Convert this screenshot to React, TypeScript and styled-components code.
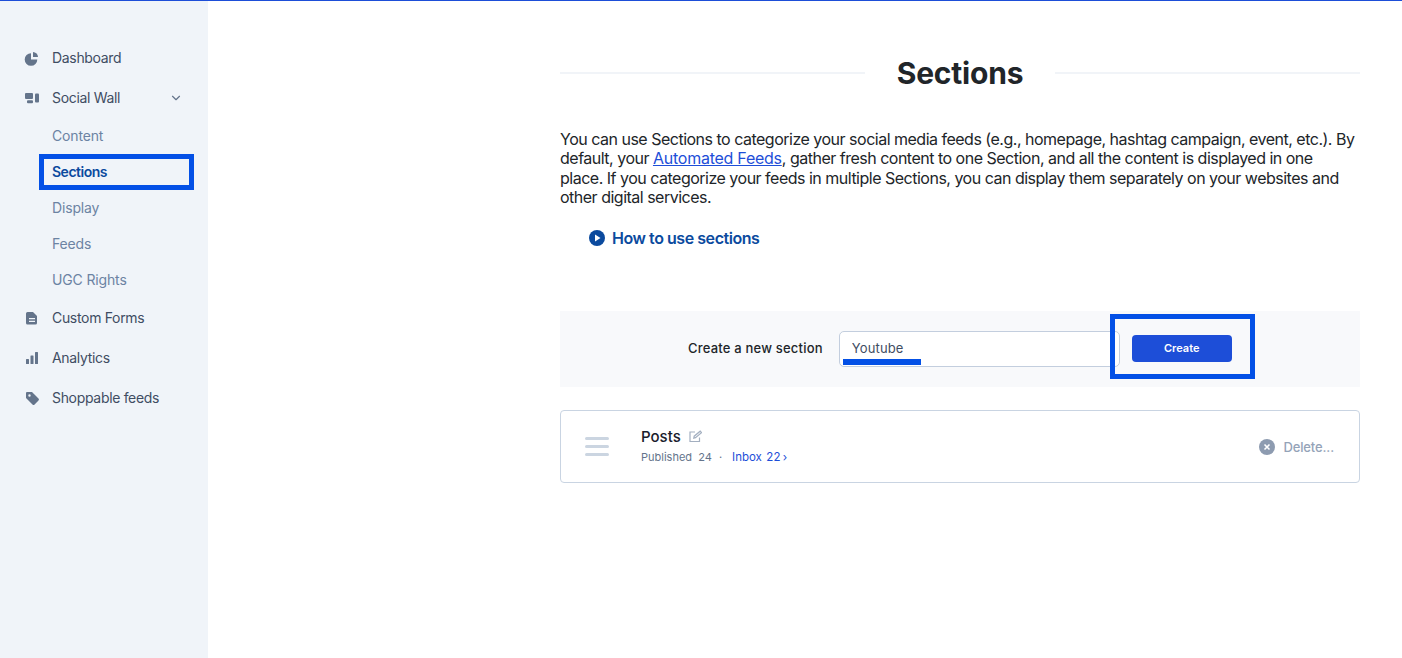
import React from "react";
import styled, { createGlobalStyle } from "styled-components";
import { ChevronDown } from "lucide-react";

const GlobalStyle = createGlobalStyle`
  html, body { margin: 0; padding: 0; background: #fff; }
  body { font-family: Inter, "Liberation Sans", sans-serif; color: #212529; }
  * { box-sizing: border-box; }
`;

const Page = styled.div`
  position: relative;
  display: flex;
  width: 1402px;
  height: 658px;
  overflow: hidden;
  border-top: 1px solid #1d4ed8;
`;

const Sidebar = styled.nav`
  width: 208px;
  flex-shrink: 0;
  background: #f0f4f9;
  padding: 36px 0 0 24px;
`;

const NavRow = styled.div`
  display: flex;
  align-items: center;
  height: 40px;
  width: 159px;
  font-size: 14px;
  letter-spacing: -0.32px;
  color: #3f4d63;
`;

const NavIcon = styled.svg`
  width: 16px;
  height: 16px;
  margin: 2px 12px 0 0;
  fill: #64748b;
  flex-shrink: 0;
`;

const Chevron = styled(ChevronDown)`
  margin: 2px 0 0 auto;
  color: #64748b;
`;

const SubList = styled.div`
  display: flex;
  flex-direction: column;
  padding: 0 0 0 28px;
`;

const SubRow = styled.div<{ $active?: boolean }>`
  display: flex;
  align-items: center;
  height: 36px;
  font-size: 14px;
  letter-spacing: ${(p) => (p.$active ? "-0.5px" : "-0.15px")};
  font-weight: ${(p) => (p.$active ? 600 : 400)};
  color: ${(p) => (p.$active ? "#0b4a9e" : "#6c83a3")};
`;

const Main = styled.main`
  flex: 1;
  padding: 0 42px 0 352px;
`;

const TitleRow = styled.div`
  display: flex;
  align-items: center;
  gap: 32px;
  height: 54px;
  margin-top: 45px;
`;

const TitleRule = styled.div`
  flex: 1;
  height: 2px;
  background: #f1f4f8;
`;

const Title = styled.h1`
  margin: 0;
  font-size: 30px;
  font-weight: 700;
  letter-spacing: -0.2px;
  line-height: 36px;
  color: #212529;
`;

const Intro = styled.p`
  margin: 30px 0 0;
  font-size: 16px;
  line-height: 19.3px;
  letter-spacing: -0.5px;
  color: #212529;
`;

const IntroLink = styled.a`
  color: #1d4ed8;
  text-decoration: underline;
  letter-spacing: -0.25px;
`;

const HowTo = styled.div`
  display: flex;
  align-items: center;
  gap: 7px;
  margin: 21px 0 0 29px;
  font-size: 16px;
  font-weight: 600;
  letter-spacing: -0.45px;
  color: #0b4a9e;
`;

const CreateBar = styled.div`
  display: flex;
  align-items: center;
  height: 76px;
  margin-top: 63px;
  padding-left: 128px;
  background: #f8f9fb;
`;

const CreateLabel = styled.label`
  font-size: 13px;
  font-weight: 500;
  letter-spacing: 0.2px;
  color: #212529;
  margin: 0 16px 2px 0;
`;

const NameInput = styled.input`
  width: 281px;
  height: 36px;
  padding: 0 12px 2px;
  border: 1px solid #c3cede;
  border-radius: 5px;
  background: #fff;
  font: 400 13px Inter, sans-serif;
  letter-spacing: 0.15px;
  color: #3f4d63;
  outline: none;
`;

const CreateButton = styled.button`
  width: 100px;
  height: 27px;
  margin: 0 0 2px 12px;
  border: none;
  border-radius: 4px;
  background: #1d4ed8;
  color: #fff;
  font: 600 11px Inter, sans-serif;
`;

const SectionCard = styled.div`
  display: flex;
  align-items: center;
  height: 73px;
  margin-top: 23px;
  padding: 0 25px 0 24px;
  border: 1px solid #c9d4e2;
  border-radius: 4px;
`;

const Handle = styled.div`
  display: flex;
  flex-direction: column;
  gap: 5px;
  width: 24px;
  margin-right: 32px;
`;

const HandleBar = styled.span`
  height: 3px;
  border-radius: 2px;
  background: #cbd5e1;
`;

const CardBody = styled.div`
  display: flex;
  flex-direction: column;
  gap: 4px;
  padding-bottom: 3px;
`;

const NameRow = styled.div`
  display: flex;
  align-items: center;
  gap: 8px;
  font-size: 15px;
  font-weight: 500;
  color: #1a202c;
`;

const Stats = styled.div`
  display: flex;
  align-items: center;
  font-size: 11px;
  color: #64748b;
`;

const Dot = styled.span`
  margin: 0 10px 0 7px;
`;

const InboxLink = styled.a`
  font-size: 11.5px;
  word-spacing: -1px;
  color: #1d4ed8;
`;

const DeleteAction = styled.div`
  display: flex;
  align-items: center;
  gap: 8px;
  margin-left: auto;
  font-size: 13px;
  font-weight: 500;
  letter-spacing: -0.12px;
  color: #94a3b8;
`;

const Highlight = styled.div`
  position: absolute;
  border: 5px solid #0350e6;
`;

const SectionsHighlight = styled(Highlight)`
  left: 39px;
  top: 153px;
  width: 155px;
  height: 36px;
`;

const CreateHighlight = styled(Highlight)`
  left: 1110px;
  top: 313px;
  width: 145px;
  height: 65px;
`;

const InputUnderline = styled.div`
  position: absolute;
  left: 843px;
  top: 358px;
  width: 78px;
  height: 6px;
  background: #0350e6;
`;

export default function App() {
  return (
    <Page>
      <GlobalStyle />
      <Sidebar>
        <NavRow>
          <NavIcon viewBox="0 0 16 16">
            <path d="M7 3.200v6.300h6.300A6.300 6.300 0 1 1 7 3.200z" />
            <path d="M9 2a5.200 5.200 0 0 1 5 5H9z" />
          </NavIcon>
          Dashboard
        </NavRow>
        <NavRow>
          <NavIcon viewBox="0 0 16 16">
            <rect x="1" y="3" width="8" height="6" rx="1" />
            <rect x="11" y="3.500" width="4" height="9" rx="1" />
            <rect x="3" y="10.300" width="6" height="3" rx="1" />
          </NavIcon>
          Social Wall
          <Chevron size={14} />
        </NavRow>
        <SubList>
          <SubRow>Content</SubRow>
          <SubRow $active>Sections</SubRow>
          <SubRow>Display</SubRow>
          <SubRow>Feeds</SubRow>
          <SubRow>UGC Rights</SubRow>
        </SubList>
        <NavRow>
          <NavIcon viewBox="0 0 16 16">
            <path
              fillRule="evenodd"
              d="M3.500 2H9l4 4v7a1.500 1.500 0 0 1-1.500 1.500h-8A1.500 1.500 0 0 1 2 13V3.500A1.500 1.500 0 0 1 3.500 2zM5 8v1.300h6V8zm0 2.700V12h6v-1.300z"
            />
          </NavIcon>
          Custom Forms
        </NavRow>
        <NavRow>
          <NavIcon viewBox="0 0 16 16">
            <rect x="2" y="9" width="3" height="5" rx="0.5" />
            <rect x="6.500" y="5.500" width="3" height="8.500" rx="0.5" />
            <rect x="11" y="2" width="3" height="12" rx="0.5" />
          </NavIcon>
          Analytics
        </NavRow>
        <NavRow>
          <NavIcon viewBox="0 0 16 16">
            <path
              fillRule="evenodd"
              d="M2 3a1 1 0 0 1 1-1h5l6.500 6.500a1.500 1.500 0 0 1 0 2.100l-3.900 3.900a1.500 1.500 0 0 1-2.100 0L2 8zm3.500 3.700a1.200 1.200 0 1 0 0-2.400 1.200 1.200 0 0 0 0 2.400z"
            />
          </NavIcon>
          Shoppable feeds
        </NavRow>
      </Sidebar>
      <Main>
        <TitleRow>
          <TitleRule />
          <Title>Sections</Title>
          <TitleRule />
        </TitleRow>
        <Intro>
          You can use Sections to categorize your social media feeds (e.g., homepage, hashtag
          campaign, event, etc.). By
          <br />
          default, your <IntroLink>Automated Feeds</IntroLink>, gather fresh content to one
          Section, and all the content is displayed in one
          <br />
          place. If you categorize your feeds in multiple Sections, you can display them separately
          on your websites and
          <br />
          other digital services.
        </Intro>
        <HowTo>
          <svg width="16" height="16" viewBox="0 0 16 16">
            <circle cx="8" cy="8" r="8" fill="#0b4a9e" />
            <path d="M6 4.500v7l5.500-3.500z" fill="#fff" />
          </svg>
          How to use sections
        </HowTo>
        <CreateBar>
          <CreateLabel>Create a new section</CreateLabel>
          <NameInput defaultValue="Youtube" />
          <CreateButton>Create</CreateButton>
        </CreateBar>
        <SectionCard>
          <Handle>
            <HandleBar />
            <HandleBar />
            <HandleBar />
          </Handle>
          <CardBody>
            <NameRow>
              Posts
              <svg width="13" height="13" viewBox="0 0 13 13" fill="none" stroke="#a3afc0" strokeWidth="1.200">
                <path d="M10.500 7.500v4h-9.500v-9.500h5" />
                <path d="M4.800 8.200l.4-2 6-5 1.300 1.500-6 5z" />
              </svg>
            </NameRow>
            <Stats>
              Published&nbsp;&nbsp;24
              <Dot>·</Dot>
              <InboxLink>Inbox&nbsp;&nbsp;22 ›</InboxLink>
            </Stats>
          </CardBody>
          <DeleteAction>
            <svg width="16" height="16" viewBox="0 0 16 16">
              <circle cx="8" cy="8" r="8" fill="#8d9bb0" />
              <path d="M5.500 5.500l5 5M10.500 5.500l-5 5" stroke="#fff" strokeWidth="1.600" />
            </svg>
            Delete...
          </DeleteAction>
        </SectionCard>
      </Main>
      <SectionsHighlight />
      <CreateHighlight />
      <InputUnderline />
    </Page>
  );
}
